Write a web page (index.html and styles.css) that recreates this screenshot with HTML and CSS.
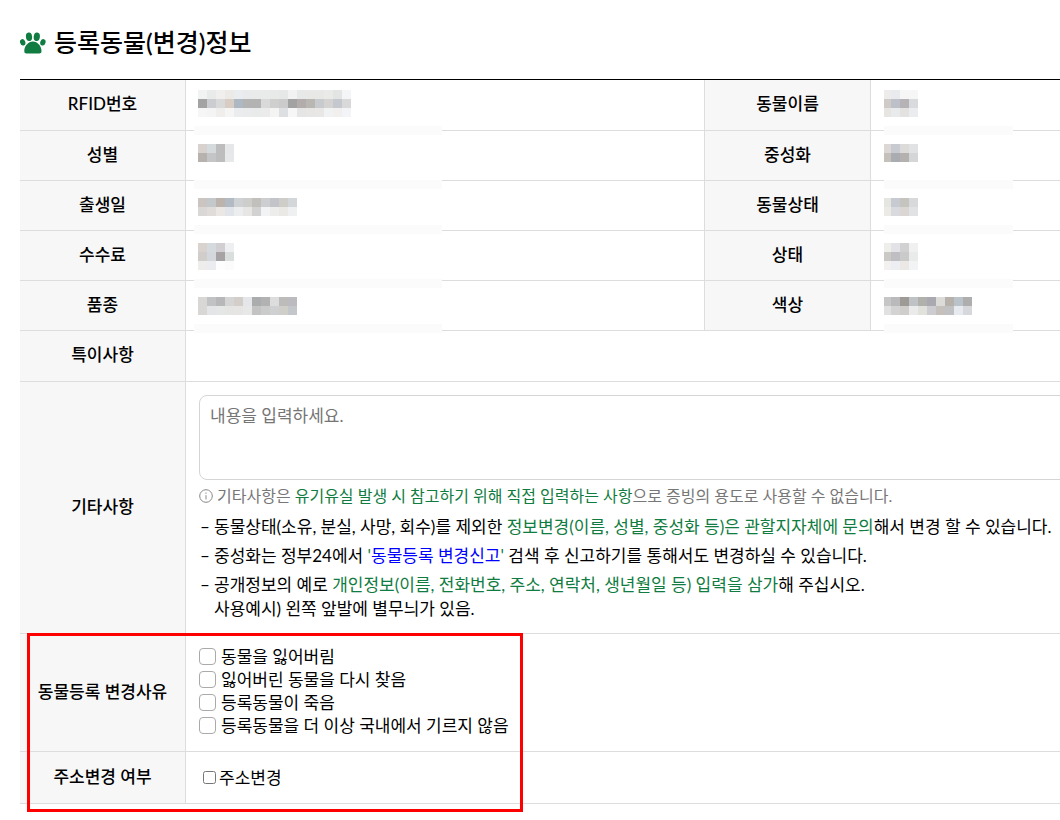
FILE: index.html
```html
<!DOCTYPE html>
<html lang="ko">
<head>
    <meta charset="UTF-8">
    <meta name="viewport" content="width=device-width, initial-scale=1.0">
    <title>등록동물(변경)정보</title>
    <link rel="stylesheet" href="styles.css">
</head>
<body>
    <main class="page">
        <h1 class="title">
            <svg class="paw" viewBox="0 0 26 22" aria-hidden="true">
                <ellipse cx="2.7" cy="10.3" rx="2.6" ry="3.3" transform="rotate(-18 2.7 10.3)"/>
                <ellipse cx="9" cy="4.7" rx="3.1" ry="4.3" transform="rotate(-6 9 4.7)"/>
                <ellipse cx="16.8" cy="4.7" rx="3.1" ry="4.3" transform="rotate(6 16.8 4.7)"/>
                <ellipse cx="22.9" cy="10.3" rx="2.6" ry="3.3" transform="rotate(18 22.9 10.3)"/>
                <path d="M12.9 9.5c4.6 0 8.6 4.6 8.6 9.5 0 1.8-.8 2.5-2.3 2.5H6.6c-1.5 0-2.3-.7-2.3-2.5 0-4.9 4-9.5 8.6-9.5z"/>
            </svg>
            등록동물(변경)정보
        </h1>

        <div class="table-wrap">
            <table class="info-table">
                <colgroup>
                    <col class="col-label">
                    <col>
                    <col class="col-label-side">
                    <col class="col-side">
                </colgroup>
                <tbody>
                    <tr class="row-first">
                        <th scope="row">RFID번호</th>
                        <td></td>
                        <th scope="row" class="th-side">동물이름</th>
                        <td></td>
                    </tr>
                    <tr>
                        <th scope="row">성별</th>
                        <td></td>
                        <th scope="row" class="th-side">중성화</th>
                        <td></td>
                    </tr>
                    <tr>
                        <th scope="row">출생일</th>
                        <td></td>
                        <th scope="row" class="th-side">동물상태</th>
                        <td></td>
                    </tr>
                    <tr>
                        <th scope="row">수수료</th>
                        <td></td>
                        <th scope="row" class="th-side">상태</th>
                        <td></td>
                    </tr>
                    <tr>
                        <th scope="row">품종</th>
                        <td></td>
                        <th scope="row" class="th-side">색상</th>
                        <td></td>
                    </tr>
                    <tr class="row-first">
                        <th scope="row">특이사항</th>
                        <td colspan="3"></td>
                    </tr>
                    <tr>
                        <th scope="row"><label for="etc">기타사항</label></th>
                        <td colspan="3" class="etc">
                            <textarea id="etc" placeholder="내용을 입력하세요."></textarea>
                            <p class="notice">
                                <svg class="info-icon" viewBox="0 0 14 14" aria-hidden="true">
                                    <circle cx="7" cy="7" r="6.3"/>
                                    <path d="M7 6.2v4.3M7 3.5v1.3"/>
                                </svg>
                                <span>기타사항은 <em class="green">유기유실 발생 시 참고하기 위해 직접 입력하는 사항</em>으로 증빙의 용도로 사용할 수 없습니다.</span>
                            </p>
                            <ul class="guide">
                                <li>동물상태(소유, 분실, 사망, 회수)를 제외한 <em class="green">정보변경(이름, 성별, 중성화 등)은 관할지자체에 문의</em>해서 변경 할 수 있습니다.</li>
                                <li>중성화는 정부24에서 <em class="green">'<a href="#">동물등록 변경신고</a>'</em> 검색 후 신고하기를 통해서도 변경하실 수 있습니다.</li>
                                <li>공개정보의 예로 <em class="green">개인정보(이름, 전화번호, 주소, 연락처, 생년월일 등) 입력을 삼가</em>해 주십시오.<br>사용예시) 왼쪽 앞발에 별무늬가 있음.</li>
                            </ul>
                        </td>
                    </tr>
                    <tr>
                        <th scope="row">동물등록 변경사유</th>
                        <td colspan="3" class="reasons">
                            <label class="check"><input type="checkbox" name="reason">동물을 잃어버림</label>
                            <label class="check"><input type="checkbox" name="reason">잃어버린 동물을 다시 찾음</label>
                            <label class="check"><input type="checkbox" name="reason">등록동물이 죽음</label>
                            <label class="check"><input type="checkbox" name="reason">등록동물을 더 이상 국내에서 기르지 않음</label>
                        </td>
                    </tr>
                    <tr class="row-address">
                        <th scope="row">주소변경 여부</th>
                        <td colspan="3">
                            <label class="check-small"><input type="checkbox" name="address">주소변경</label>
                        </td>
                    </tr>
                </tbody>
            </table>

            <!-- 개인정보 가림 -->
            <svg class="mask mask-left" aria-hidden="true"></svg>
            <svg class="mask mask-right" aria-hidden="true"></svg>

            <!-- 강조 영역 -->
            <div class="highlight"></div>
        </div>
    </main>
    <script src="script.js"></script>
</body>
</html>
```

FILE: styles.css
```css
* {
    margin: 0;
    padding: 0;
    box-sizing: border-box;
}

body {
    font-family: Lato, "Noto Sans CJK KR", sans-serif;
    font-size: 17px;
    line-height: 24px;
    color: #000;
    background: #fff;
}

.page {
    padding: 24px 0 8px 20px;
    overflow: hidden;
}

.title {
    display: flex;
    align-items: center;
    gap: 8px;
    margin-bottom: 19px;
    font-size: 25px;
    font-weight: 500;
    line-height: 36px;
}

.paw {
    width: 26px;
    height: 22px;
    margin-top: 2px;
    fill: #107c41;
}

.table-wrap {
    position: relative;
}

.info-table {
    width: 100%;
    table-layout: fixed;
    border-collapse: separate;
    border-spacing: 0;
    border-top: 1px solid #000;
}

.col-label {
    width: 166px;
}

.col-label-side {
    width: 167px;
}

.col-side {
    width: 189px;
}

.info-table th,
.info-table td {
    height: 50px;
    border-bottom: 1px solid #ddd;
}

.info-table th {
    padding-bottom: 2px;
    background: #f7f7f7;
    border-right: 1px solid #ddd;
    font-weight: 500;
    text-align: center;
}

.info-table .th-side {
    border-left: 1px solid #ddd;
}

.info-table td {
    padding: 0 13px;
}

.info-table .row-first th,
.info-table .row-first td {
    height: 51px;
}

.info-table .row-address th,
.info-table .row-address td {
    height: 52px;
}

.info-table .etc {
    padding: 13px 0 12px 13px;
    overflow: hidden;
    white-space: nowrap;
}

/* 오른쪽 테두리는 화면 밖으로 */
.etc textarea {
    display: block;
    width: calc(100% + 20px);
    height: 85px;
    padding: 8px 10px;
    border: 1px solid #d5d5d5;
    border-radius: 8px;
    font: inherit;
    resize: none;
}

.etc textarea::placeholder {
    color: #757575;
}

.notice {
    display: flex;
    align-items: center;
    gap: 4px;
    margin-top: 4px;
    font-size: 16px;
    color: #777;
}

.info-icon {
    width: 14px;
    height: 14px;
    fill: none;
    stroke: #888;
}

.green {
    color: #107c41;
    font-style: normal;
}

.green a {
    color: #00f;
    text-decoration: none;
}

.guide {
    margin-top: 7px;
    list-style: none;
}

.guide li {
    padding-left: 15px;
    margin-bottom: 5px;
}

.guide li:last-child {
    margin-bottom: 0;
}

.guide li::before {
    content: "–";
    display: inline-block;
    width: 14px;
    margin-left: -14px;
}

.info-table .reasons {
    padding: 11px 13px 14px;
}

.check {
    display: flex;
    align-items: center;
    gap: 5px;
    line-height: 23px;
}

.check input {
    appearance: none;
    width: 17px;
    height: 17px;
    border: 1px solid #aaa;
    border-radius: 4px;
    background: #fff;
}

.check-small {
    display: flex;
    align-items: center;
    gap: 3px;
    padding-left: 4px;
}

.check-small input {
    width: 13px;
    height: 13px;
}

.mask {
    position: absolute;
    top: 11px;
    height: 243px;
}

.mask-left {
    left: 174px;
    width: 248px;
}

.mask-right {
    right: 47px;
    width: 129px;
}

.highlight {
    position: absolute;
    left: 7px;
    bottom: -8px;
    width: 496px;
    height: 179px;
    border: 3px solid #f00;
}
```

FILE: script.js
```javascript
const SIZE = 9;

// 행 번호: 모자이크 색상 목록
const LEFT = {
    0: 'f1f2f2 e9ebea f0efed eceae7 eaedf0 e9eaeb e9eaea e9ebeb e8eaea e6e7e7 f2f2f2 e7e8e8 e8e8e7 e8e8e6 eaeae9 e3e4e4 f4f5f7',
    1: 'a3a3a3 cccdd1 d9d9d9 d7cdc4 adb8c2 b3b3b3 b3b3b3 d9d9d9 cfcfce cbcbcc a3a2a2 b2acac b9b7b1 c7cbcd d4d3d2 c5c8ce d9d9d9',
    2: 'f6f6f6 f4f4f4 f0eeec f5f5f3 eaecee e9ebec e9eaea ebebeb f4f4f2 dedfe3 f6f6f6 e5e5e6 e7e6e4 e8e7e5 f1f2f4 f2f0ee f2f4f7',
    6: 'd8d2ce d5dadd bdbdbd e5e7e9',
    7: 'b8b2af c4c5c7 bdbdbd e7e8e9',
    12: 'cbc5c1 c3c8cb bcb3ad b2bbc4 cfd2d4 cdcdcc c1c0bd cdced0 c3c4c9 cfcdc8 d3d7da',
    13: 'd9d8d7 dfdcd9 ebe7e4 e1e5e9 ebedee e7e6e4 d2d2d2 f2f3f4 ededec ebe9e6 eff0f2',
    17: 'd8d3cf d4dade d1cfd1 eeeff1',
    18: 'd1cdca d4d8dc a7a2a4 dadedd',
    19: 'efedeb eaecef fdfdfe fbfbfb',
    23: 'd8d7d5 c0c2c4 b7b7b9 d5d5d5 d4ceca e4e6e9 abacae b2b2b2 dddddd bdbcba bcbbc0',
    24: 'd8d7d5 e3e5e7 e5e6e6 e5e5e4 e6e5e3 e8e8e8 c3c3c3 cbcbcb ced0d1 d0cec9 c3c7cb'
};

const RIGHT = {
    0: 'eeecea e8eaed f6f6f6 f6f6f6',
    1: 'cfccc7 bdc0c8 b5b3b5 d9dadd',
    2: 'e7e5e2 e8eaec e3e2e0 ebecef',
    6: 'dbd8d5 c7cad0 dddbda e1e2e4',
    7: 'c4c1bb a9acb1 b5b1b0 d5d6d8',
    12: 'e5e6df c8cad2 c6c4bf d8d9db',
    13: 'ebeae5 d9dade d9d6d3 e1e2e4',
    17: 'eeeeea e2e2e7 d1d1d2 f0f0f1',
    18: 'cac9c5 bebec3 cacaca e9ebea',
    19: 'f3f1ef eceef1 ebe8e6 f2f3f5',
    23: 'c6c6c7 bab9bc 9e9a96 bfc3c5 b0b1aa aaa9b1 dddbd7 b6b1aa bac2ca aeaeaf',
    24: 'e1e1e1 d3d3d3 cfcecd ebebeb e2e2dd cdcdd1 c5c0bc c0c1c3 e7eaee d7d8db'
};

const STRIPS = [4, 10, 15, 21, 26];

function addRect(svg, x, y, width, fill) {
    const rect = document.createElementNS('http://www.w3.org/2000/svg', 'rect');
    rect.setAttribute('x', x);
    rect.setAttribute('y', y);
    rect.setAttribute('width', width);
    rect.setAttribute('height', SIZE);
    rect.setAttribute('fill', fill);
    svg.appendChild(rect);
}

function drawMask(selector, rows, offset) {
    const svg = document.querySelector(selector);

    STRIPS.forEach(row => addRect(svg, 0, row * SIZE, 248, '#fbfbfb'));

    Object.keys(rows).forEach(row => {
        rows[row].split(' ').forEach((color, i) => {
            addRect(svg, offset + i * SIZE, row * SIZE, SIZE, '#' + color);
        });
    });
}

drawMask('.mask-left', LEFT, 4);
drawMask('.mask-right', RIGHT, -2);
```
